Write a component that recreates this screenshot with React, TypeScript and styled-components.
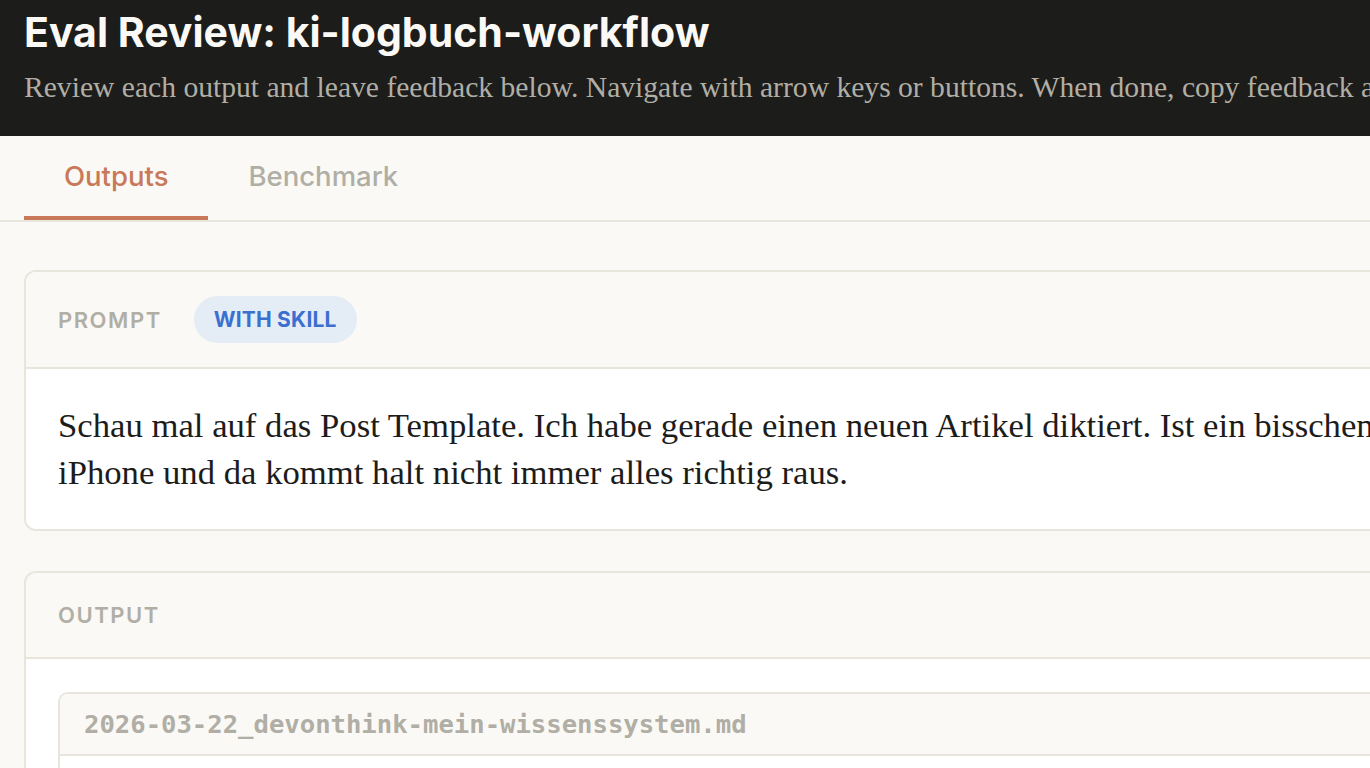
import React from "react";
import styled, { createGlobalStyle } from "styled-components";

const SANS = `"Inter", "Noto Sans", sans-serif`;
const SERIF = `"Liberation Serif", "DejaVu Serif", serif`;
const MONO = `"DejaVu Sans Mono", "Liberation Mono", monospace`;

const Global = createGlobalStyle`
  html, body {
    margin: 0;
    padding: 0;
    background: #faf9f5;
    overflow: hidden;
  }
  * { box-sizing: border-box; }
`;

const Page = styled.div`
  width: 1780px;
  min-height: 768px;
  background: #faf9f5;
`;

const Header = styled.header`
  height: 136px;
  background: #1c1c1b;
  padding: 9px 24px 0;
`;

const Title = styled.h1`
  margin: 0;
  font-family: ${SANS};
  font-weight: 700;
  font-size: 41px;
  line-height: 1.15;
  color: #faf9f5;
  white-space: nowrap;
`;

const Subtitle = styled.p`
  margin: 11px 0 0;
  font-family: ${SERIF};
  font-size: 29.6px;
  line-height: 1.4;
  color: #b0aea5;
  white-space: nowrap;
`;

const TabBar = styled.nav`
  display: flex;
  padding: 0 24px;
  border-bottom: 2px solid #e8e6dc;
  background: #faf9f5;
`;

const Tab = styled.button<{ $active?: boolean }>`
  height: 84px;
  padding: 0 40px;
  border: none;
  border-bottom: 4px solid ${(p) => (p.$active ? "#c9785a" : "transparent")};
  background: none;
  font-family: ${SANS};
  font-weight: 500;
  font-size: 27.5px;
  color: ${(p) => (p.$active ? "#c9785a" : "#b0aea5")};
  cursor: pointer;
`;

const Main = styled.main`
  padding: 48px 24px;
  display: flex;
  flex-direction: column;
  gap: 40px;
`;

const Card = styled.section`
  border: 2px solid #e8e6dc;
  border-radius: 12px;
  overflow: hidden;
  background: #ffffff;
`;

const CardHeader = styled.div`
  display: flex;
  align-items: center;
  gap: 32px;
  padding: 24px 32px;
  background: #faf9f5;
  border-bottom: 2px solid #e8e6dc;
`;

const Label = styled.span`
  font-family: ${SANS};
  font-weight: 600;
  font-size: 22px;
  line-height: 36px;
  letter-spacing: 0.07em;
  text-transform: uppercase;
  color: #b0aea5;
`;

const Badge = styled.span`
  display: inline-flex;
  align-items: center;
  height: 47px;
  padding: 0 20px;
  border-radius: 999px;
  background: #e4ecf6;
  font-family: ${SANS};
  font-weight: 700;
  font-size: 21px;
  letter-spacing: 0.01em;
  color: #3b70cf;
`;

const CardBody = styled.div`
  padding: 33px 32px;
  background: #ffffff;
`;

const PromptText = styled.p`
  margin: 0;
  font-family: ${SERIF};
  font-size: 34.7px;
  line-height: 47px;
  color: #1c1c1b;
  white-space: pre-line;
`;

const FileBlock = styled.div`
  border: 2px solid #e8e6dc;
  border-radius: 10px;
  overflow: hidden;
`;

const FileHeader = styled.div`
  padding: 12px 24px;
  background: #faf9f5;
  border-bottom: 2px solid #e8e6dc;
  font-family: ${MONO};
  font-weight: 700;
  font-size: 25.6px;
  line-height: 36px;
  color: #b0aea5;
`;

const FileContent = styled.pre`
  margin: 0;
  padding: 24px;
  min-height: 120px;
  font-family: ${MONO};
  font-size: 24px;
  color: #1c1c1b;
  background: #ffffff;
`;

const prompt =
  "Schau mal auf das Post Template. Ich habe gerade einen neuen Artikel diktiert. Ist ein bisschen holprig, diktiert am\niPhone und da kommt halt nicht immer alles richtig raus.";

export default function App() {
  return (
    <Page>
      <Global />
      <Header>
        <Title>Eval Review: ki-logbuch-workflow</Title>
        <Subtitle>
          Review each output and leave feedback below. Navigate with arrow keys or buttons. When done, copy feedback and paste into Claude Code.
        </Subtitle>
      </Header>
      <TabBar>
        <Tab $active>Outputs</Tab>
        <Tab>Benchmark</Tab>
      </TabBar>
      <Main>
        <Card>
          <CardHeader>
            <Label>Prompt</Label>
            <Badge>WITH SKILL</Badge>
          </CardHeader>
          <CardBody>
            <PromptText>{prompt}</PromptText>
          </CardBody>
        </Card>
        <Card>
          <CardHeader>
            <Label>Output</Label>
          </CardHeader>
          <CardBody>
            <FileBlock>
              <FileHeader>2026-03-22_devonthink-mein-wissenssystem.md</FileHeader>
              <FileContent>{"---\ntitle: DEVONthink – mein Wissenssystem\n---"}</FileContent>
            </FileBlock>
          </CardBody>
        </Card>
      </Main>
    </Page>
  );
}
